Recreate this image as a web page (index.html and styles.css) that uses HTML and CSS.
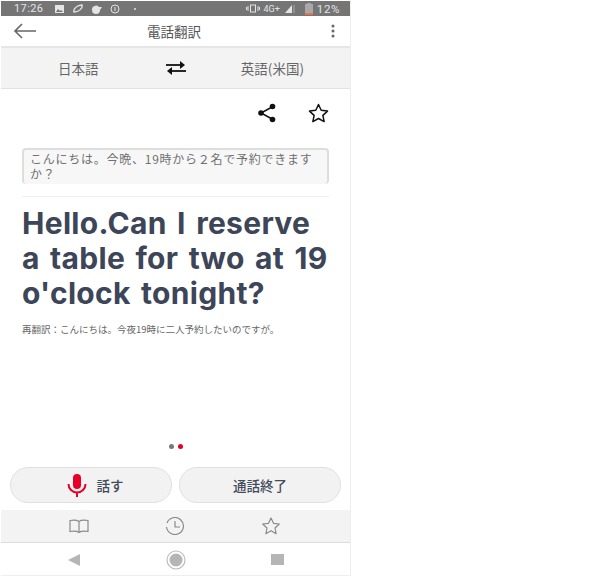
FILE: index.html
```html
<!DOCTYPE html>
<html lang="ja">
<head>
    <meta charset="UTF-8">
    <meta name="viewport" content="width=device-width, initial-scale=1.0">
    <title>電話翻訳</title>
    <link rel="stylesheet" href="styles.css">
</head>
<body>
    <div class="phone">
        <div class="status">
            <div class="status-side status-left">
                <span class="time">17:26</span>
                <svg width="11" height="10" viewBox="0 0 11 10"><rect x="1" y="1" width="9" height="8" fill="#e4e4e4"/><path d="M2 8l2-3 2 2 1-1 2 2z" fill="#757575"/></svg>
                <svg width="12" height="11" viewBox="0 0 12 11"><path d="M2 9C1 6 5 2 10 2 11 5 7 9 2 9z" fill="none" stroke="#e4e4e4" stroke-width="1.3"/></svg>
                <svg width="12" height="10" viewBox="0 0 12 10"><path d="M1 6a4 4 0 0 1 7-3h3L9 6a4 4 0 0 1-8 0z" fill="#e4e4e4"/></svg>
                <svg width="10" height="10" viewBox="0 0 10 10"><circle cx="5" cy="5" r="4" fill="none" stroke="#e4e4e4"/><path d="M5 3v4" stroke="#e4e4e4"/></svg>
                <span class="st-dot"></span>
            </div>
            <div class="status-side">
                <svg width="14" height="9" viewBox="0 0 14 9"><rect x="4.500" y="1" width="5" height="7" fill="none" stroke="#e4e4e4"/><path d="M2 2v5M12 2v5M0.500 3v3M13.500 3v3" stroke="#e4e4e4"/></svg>
                <span class="net">4G+</span>
                <svg class="signal" width="11" height="10" viewBox="0 0 11 10"><path d="M1 9L8 1v8z" fill="#e4e4e4"/><path d="M10 1v8" stroke="#aaa"/></svg>
                <svg width="8" height="12" viewBox="0 0 8 12"><rect x="0" y="1" width="8" height="11" fill="#a8a8a8"/><rect x="2" y="0" width="4" height="1" fill="#a8a8a8"/><rect x="0" y="10" width="8" height="2" fill="#e8734a"/></svg>
                <span class="pct">12%</span>
            </div>
        </div>

        <div class="header">
            <svg width="24" height="16" viewBox="0 0 24 16"><path d="M23 8H2M9 1L2 8l7 7" fill="none" stroke="#666" stroke-width="1.6"/></svg>
            <span class="header-title">電話翻訳</span>
            <svg class="header-more" width="4" height="14" viewBox="0 0 4 14"><circle cx="2" cy="2" r="1.5" fill="#666"/><circle cx="2" cy="7" r="1.5" fill="#666"/><circle cx="2" cy="12" r="1.5" fill="#666"/></svg>
        </div>

        <div class="langs">
            <span class="lang">日本語</span>
            <svg class="swap" width="20" height="14" viewBox="0 0 20 14"><path d="M0 4h15" stroke="#111" stroke-width="1.8"/><path d="M14 0l5 4-5 4z" fill="#111"/><path d="M20 10H5" stroke="#111" stroke-width="1.8"/><path d="M6 6l-5 4 5 4z" fill="#111"/></svg>
            <span class="lang">英語(米国)</span>
        </div>

        <div class="main">
            <div class="actions">
                <svg width="20" height="20" viewBox="0 0 20 20"><path d="M16 3.500L4 10l12 6.500" fill="none" stroke="#111" stroke-width="1.500"/><circle cx="15.500" cy="3.500" r="2.800" fill="#111"/><circle cx="4" cy="10" r="2.800" fill="#111"/><circle cx="15.500" cy="16.500" r="2.800" fill="#111"/></svg>
                <svg width="21" height="20" viewBox="0 0 21 20"><path d="M10.500 1.500l2.700 5.800 6.300.8-4.600 4.300 1.200 6.200-5.600-3.100-5.600 3.100 1.200-6.200L1.500 8.100l6.300-.8z" fill="none" stroke="#111" stroke-width="1.500" stroke-linejoin="round"/></svg>
            </div>
            <div class="source">こんにちは。今晩、19時から２名で予約できますか？</div>
            <div class="divider"></div>
            <h1 class="result">Hello.Can I reserve a table for two at 19 o'clock tonight?</h1>
            <p class="back">再翻訳：こんにちは。今夜19時に二人予約したいのですが。</p>
            <div class="dots"><span class="dot"></span><span class="dot dot-on"></span></div>
            <div class="buttons">
                <div class="btn">
                    <svg class="btn-mic" width="20" height="23" viewBox="0 0 20 23"><rect x="6" y="0" width="8" height="15" rx="4" fill="#e60026"/><path d="M1.500 10a8.500 8.500 0 0 0 17 0M10 18.500V23" fill="none" stroke="#e60026" stroke-width="2"/></svg>
                    <span>話す</span>
                </div>
                <div class="btn"><span>通話終了</span></div>
            </div>
        </div>

        <div class="tabs">
            <svg width="20" height="14" viewBox="0 0 20 14"><path d="M10 2.500C8 1 4 1 1 1.500v11c3-.5 7-.5 9 1 2-1.500 6-1.500 9-1v-11C16 1 12 1 10 2.500zV13.500" fill="none" stroke="#8a8a8a" stroke-width="1.200"/></svg>
            <svg width="20" height="18" viewBox="0 0 20 18"><path d="M2 6a8.500 8.500 0 1 1-.5 4" fill="none" stroke="#8a8a8a" stroke-width="1.200"/><path d="M10 4v6h5" fill="none" stroke="#8a8a8a" stroke-width="1.200"/></svg>
            <svg width="20" height="18" viewBox="0 0 20 18"><path d="M10 1l2.500 5.300 5.800.7-4.300 4 1.100 5.700-5.100-2.900-5.100 2.900L6 11 1.700 7l5.800-.7z" fill="none" stroke="#8a8a8a" stroke-width="1.200" stroke-linejoin="round"/></svg>
        </div>

        <div class="nav">
            <svg width="12" height="12" viewBox="0 0 12 12"><path d="M12 0v12L0 6z" fill="#b5b5b5"/></svg>
            <svg width="20" height="20" viewBox="0 0 20 20"><circle cx="10" cy="10" r="9" fill="none" stroke="#bcbcbc" stroke-width="1.200"/><circle cx="10" cy="10" r="6.500" fill="#b5b5b5"/></svg>
            <svg width="13" height="11" viewBox="0 0 13 11"><rect width="13" height="11" fill="#b5b5b5"/></svg>
        </div>
    </div>
</body>
</html>
```

FILE: styles.css
```css
body {
    margin: 0;
    background: #ffffff;
    font-family: "Noto Sans CJK JP", "Liberation Sans", sans-serif;
}
.phone {
    width: 349px;
    height: 575px;
    margin-left: 1px;
    border-right: 1px solid #eeeeee;
    border-bottom: 1px solid #eeeeee;
    display: flex;
    flex-direction: column;
    overflow: hidden;
}
.status {
    flex: none;
    height: 15px;
    margin-top: 1px;
    padding: 0 10px 0 13px;
    background: #757575;
    color: #e4e4e4;
    display: flex;
    align-items: center;
    justify-content: space-between;
}
.status-side {
    display: flex;
    align-items: center;
    gap: 4px;
}
.status-left {
    gap: 7px;
}
.time {
    font-family: Roboto, sans-serif;
    font-size: 11px;
    letter-spacing: 0.4px;
    margin-right: 4px;
}
.st-dot {
    width: 2px;
    height: 2px;
    margin-left: 7px;
    background: #e4e4e4;
    border-radius: 50%;
}
.net {
    font-family: Roboto, sans-serif;
    font-size: 9px;
}
.signal {
    margin-right: 6px;
}
.pct {
    font-family: Roboto, sans-serif;
    font-size: 11.500px;
    letter-spacing: 0.6px;
}
.header {
    flex: none;
    height: 30px;
    padding: 0 15px 0 12px;
    border-bottom: 2px solid #e6e6e6;
    display: grid;
    grid-template-columns: 1fr auto 1fr;
    align-items: center;
}
.header-title {
    font-size: 13.500px;
    color: #555555;
}
.header-more {
    justify-self: end;
}
.langs {
    flex: none;
    height: 40px;
    padding: 0 46px 0 57px;
    background: #f3f3f3;
    border-bottom: 1px solid #e2e2e2;
    display: flex;
    align-items: center;
    justify-content: space-between;
    color: #666666;
    font-size: 13.500px;
}
.swap {
    margin-left: 12px;
}
.main {
    flex: 1;
    padding: 0 21px;
    display: flex;
    flex-direction: column;
}
.actions {
    height: 45px;
    padding-top: 14px;
    display: flex;
    align-items: flex-start;
    justify-content: flex-end;
    gap: 31px;
}
.source {
    height: 36px;
    box-sizing: border-box;
    padding: 2px 6px;
    background: #f7f7f7;
    border: 1px solid #dddddd;
    border-width: 2px 2px 0 2px;
    border-radius: 4px;
    color: #707070;
    font-size: 12px;
    line-height: 14.500px;
    letter-spacing: 0.75px;
}
.divider {
    height: 1px;
    margin-top: 12px;
    background: #eeeeee;
}
.result {
    margin: 9px 0 0;
    font-family: Inter, sans-serif;
    font-size: 30px;
    line-height: 35px;
    font-weight: 700;
    letter-spacing: 0.3px;
    word-spacing: 3px;
    color: #3d4558;
}
.back {
    margin: 11px 0 0;
    font-size: 9.500px;
    line-height: 14px;
    color: #666666;
}
.dots {
    margin-top: 108px;
    height: 6px;
    display: flex;
    justify-content: center;
    gap: 4px;
}
.dot {
    width: 5px;
    height: 5px;
    border-radius: 50%;
    background: #777777;
}
.dot-on {
    background: #e60026;
}
.buttons {
    margin: 17px -12px 0;
    display: flex;
    gap: 7px;
}
.btn {
    flex: 1;
    height: 36px;
    box-sizing: border-box;
    background: #f2f2f2;
    border: 1px solid #e0e0e0;
    border-radius: 18px;
    display: flex;
    align-items: center;
    justify-content: center;
    gap: 10px;
    color: #444b5c;
    font-size: 13.500px;
    font-weight: 500;
}
.btn-mic {
    margin-left: 8px;
}
.tabs {
    flex: none;
    height: 32px;
    padding: 0 69px 0 68px;
    background: #f3f3f3;
    border-bottom: 1px solid #dddddd;
    display: flex;
    align-items: center;
    justify-content: space-between;
}
.nav {
    flex: none;
    height: 32px;
    padding: 1px 66px 0 67px;
    box-sizing: border-box;
    display: flex;
    align-items: center;
    justify-content: space-between;
}
```
